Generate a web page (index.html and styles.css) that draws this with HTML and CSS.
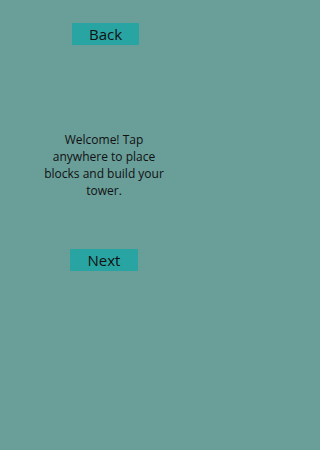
FILE: index.html
```html
<!DOCTYPE html>
<html>
<head>
<meta charset="utf-8">
<link rel="stylesheet" href="styles.css">
</head>
<body>
<main class="screen">
  <button class="btn btn-back">Back</button>
  <p class="message">Welcome! Tap anywhere to place blocks and build your tower.</p>
  <button class="btn btn-next">Next</button>
</main>
</body>
</html>
```
FILE: styles.css
```css
html, body {
  margin: 0;
  padding: 0;
  height: 100%;
  background: #699e99;
}
.screen {
  width: 208px;
  height: 450px;
  box-sizing: border-box;
  display: flex;
  flex-direction: column;
  align-items: center;
  font-family: "Open Sans", sans-serif;
  color: #111;
  padding-top: 23px;
}
.btn {
  font-family: "Open Sans", sans-serif;
  font-size: 15px;
  color: #111;
  background: #28a5a2;
  border: none;
  border-radius: 0;
  height: 22px;
  width: 67px;
  padding: 0;
  line-height: 22px;
}
.btn-back {
  margin-left: 3px;
}
.message {
  margin: 86px 0 0;
  width: 130px;
  text-align: center;
  font-size: 12px;
  line-height: normal;
}
.btn-next {
  width: 68px;
  margin-top: 50px;
}
```
